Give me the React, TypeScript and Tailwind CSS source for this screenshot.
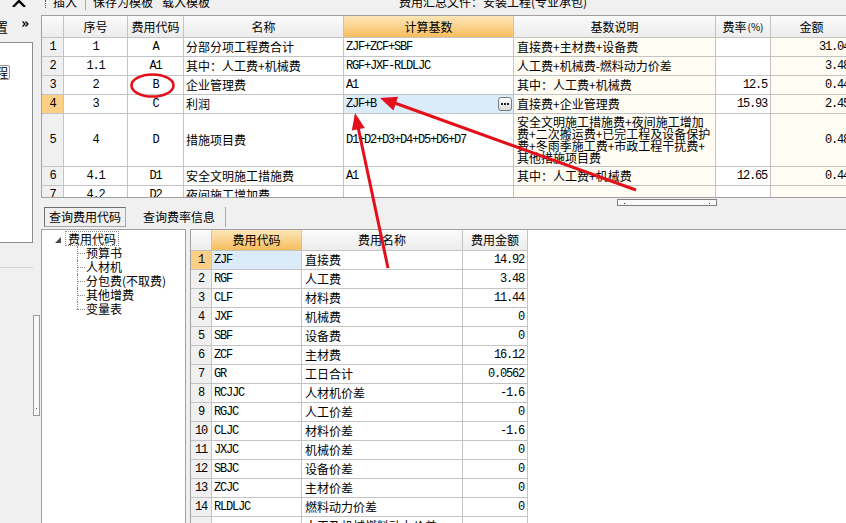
import React from 'react';

const CN = "font-['Noto_Sans_CJK_SC',sans-serif] text-[12px]";
const MONO = "font-['Liberation_Mono','Noto_Sans_CJK_SC',monospace] text-[12px] tracking-[-1.2px]";

type TopRow = {
  n: string;
  no: string;
  code: string;
  name: string;
  base: string;
  desc: string[];
  rate: string;
  amt: string;
  tall?: boolean;
  sel?: boolean;
};

const topRows: TopRow[] = [
  { n: '1', no: '1', code: 'A', name: '分部分项工程费合计', base: 'ZJF+ZCF+SBF', desc: ['直接费+主材费+设备费'], rate: '', amt: '31.04' },
  { n: '2', no: '1.1', code: 'A1', name: '其中：人工费+机械费', base: 'RGF+JXF-RLDLJC', desc: ['人工费+机械费-燃料动力价差'], rate: '', amt: '3.48' },
  { n: '3', no: '2', code: 'B', name: '企业管理费', base: 'A1', desc: ['其中：人工费+机械费'], rate: '12.5', amt: '0.44' },
  { n: '4', no: '3', code: 'C', name: '利润', base: 'ZJF+B', desc: ['直接费+企业管理费'], rate: '15.93', amt: '2.45', sel: true },
  {
    n: '5', no: '4', code: 'D', name: '措施项目费', base: 'D1+D2+D3+D4+D5+D6+D7',
    desc: ['安全文明施工措施费+夜间施工增加', '费+二次搬运费+已完工程及设备保护', '费+冬雨季施工费+市政工程干扰费+', '其他措施项目费'],
    rate: '', amt: '0.48', tall: true,
  },
  { n: '6', no: '4.1', code: 'D1', name: '安全文明施工措施费', base: 'A1', desc: ['其中：人工费+机械费'], rate: '12.65', amt: '0.44' },
  { n: '7', no: '4.2', code: 'D2', name: '夜间施工增加费', base: '', desc: [''], rate: '', amt: '' },
];

const codes: [string, string, string][] = [
  ['ZJF', '直接费', '14.92'],
  ['RGF', '人工费', '3.48'],
  ['CLF', '材料费', '11.44'],
  ['JXF', '机械费', '0'],
  ['SBF', '设备费', '0'],
  ['ZCF', '主材费', '16.12'],
  ['GR', '工日合计', '0.0562'],
  ['RCJJC', '人材机价差', '-1.6'],
  ['RGJC', '人工价差', '0'],
  ['CLJC', '材料价差', '-1.6'],
  ['JXJC', '机械价差', '0'],
  ['SBJC', '设备价差', '0'],
  ['ZCJC', '主材价差', '0'],
  ['RLDLJC', '燃料动力价差', '0'],
  ['', '人工及机械燃料动力价差', ''],
];

const treeItems = ['预算书', '人材机', '分包费(不取费)', '其他增费', '变量表'];

const HEAD = 'bg-gradient-to-b from-[#fbfbfb] to-[#ececec]';
const HEAD_SEL = 'bg-gradient-to-b from-[#fde7b8] to-[#f6bd5c]';

const Toolbar = () => (
  <div className={`h-[15px] overflow-hidden flex items-start ${CN}`}>
    <svg width="14" height="8" viewBox="0 0 14 8" className="ml-[12px] -mt-[1px] shrink-0">
      <polyline points="1,8 7,2 13,8" fill="none" stroke="#000" strokeWidth="2.4" />
    </svg>
    <div className="ml-[19px] w-[1px] h-[8px] border-l border-dotted border-[#555]" />
    <span className="ml-[7px] -mt-[5px] leading-[14px]">插入</span>
    <div className="ml-[8px] w-[1px] h-[10px] bg-[#a8a8a8]" />
    <span className="ml-[7px] -mt-[5px] leading-[14px]">保存为模板</span>
    <span className="ml-[9px] -mt-[5px] leading-[14px]">载入模板</span>
    <span className="ml-[189px] -mt-[5px] leading-[14px]">费用汇总文件：安装工程(专业承包)</span>
  </div>
);

const LeftStrip = () => (
  <div className="w-[41px] shrink-0 flex flex-col">
    <div className={`h-[27px] flex items-start ${CN}`}>
      <span className="-ml-[5px] mt-[5px] text-[13px] leading-[14px]">置</span>
      <svg width="7" height="6" viewBox="0 0 7 6" className="ml-[14px] mt-[6px]">
        <polyline points="0.5,0.5 3,3 0.5,5.5" fill="none" stroke="#000" strokeWidth="1.3" />
        <polyline points="3.5,0.5 6,3 3.5,5.5" fill="none" stroke="#000" strokeWidth="1.3" />
      </svg>
    </div>
    <div className="w-[33px] h-[201px] bg-white border-t border-r border-b border-[#8c8c8c] pt-[17px]">
      <span className={`-ml-[6px] inline-block border border-[#9a9a9a] rounded-[2px] bg-[#f4f4f4] leading-[13px] px-[1px] ${CN}`}>程</span>
    </div>
    <div className="w-[33px] h-[25px] border-b border-[#d6d6d6]" />
    <div className="ml-[33px] mt-[47px] w-[7px] h-[101px] border border-[#9a9a9a] bg-[#f8f8f8] flex items-end justify-center pb-[6px]">
      <div className="w-[1px] h-[1px] bg-[#444]" />
    </div>
  </div>
);

const TopGrid = () => (
  <div className="h-[183px] overflow-hidden border-l border-t border-b border-[#a0a0a0] bg-white">
    <div className="w-[811px]">
      <div className={`flex h-[22px] border-b border-[#c4c4c4] ${CN}`}>
        <div className={`w-[22px] shrink-0 border-r border-[#c4c4c4] ${HEAD}`} />
        <div className={`w-[64px] shrink-0 border-r border-[#c4c4c4] flex items-center justify-center ${HEAD}`}>序号</div>
        <div className={`w-[56px] shrink-0 border-r border-[#c4c4c4] flex items-center justify-center ${HEAD}`}>费用代码</div>
        <div className={`w-[160px] shrink-0 border-r border-[#c4c4c4] flex items-center justify-center ${HEAD}`}>名称</div>
        <div className={`w-[170px] shrink-0 border-r border-[#c4c4c4] flex items-center justify-center ${HEAD_SEL}`}>计算基数</div>
        <div className={`w-[202px] shrink-0 border-r border-[#c4c4c4] flex items-center justify-center ${HEAD}`}>基数说明</div>
        <div className={`w-[55px] shrink-0 border-r border-[#c4c4c4] flex items-center justify-center ${HEAD}`}>
          费率<span className="text-[10px] ml-[1px]">(%)</span>
        </div>
        <div className={`w-[82px] shrink-0 border-r border-[#c4c4c4] flex items-center justify-center ${HEAD}`}>金额</div>
      </div>
      {topRows.map((r) => (
        <div key={r.n} className={`flex border-b border-[#c4c4c4] ${r.tall ? 'h-[53px]' : 'h-[19px]'}`}>
          <div className={`w-[22px] shrink-0 border-r border-[#c4c4c4] flex items-center justify-center ${r.sel ? 'bg-[#fbcf86]' : 'bg-[#f0f0f0]'} ${MONO}`}>{r.n}</div>
          <div className={`w-[64px] shrink-0 border-r border-[#c4c4c4] flex items-center justify-center ${MONO}`}>{r.no}</div>
          <div className={`w-[56px] shrink-0 border-r border-[#c4c4c4] flex items-center justify-center ${MONO}`}>{r.code}</div>
          <div className={`w-[160px] shrink-0 border-r border-[#c4c4c4] flex items-center pl-[2px] whitespace-nowrap ${CN}`}>{r.name}</div>
          <div className={`w-[170px] shrink-0 border-r border-[#c4c4c4] flex items-center pl-[2px] pr-[1px] ${r.sel ? 'bg-[#dcebfa]' : ''} ${MONO}`}>
            <span className="flex-1">{r.base}</span>
            {r.sel && (
              <span className="w-[14px] h-[14px] rounded-[3px] border border-[#7c7c7c] bg-gradient-to-b from-white to-[#dcdcdc] flex items-center justify-center gap-[1px]">
                <span className="w-[2px] h-[2px] bg-[#222]" />
                <span className="w-[2px] h-[2px] bg-[#222]" />
                <span className="w-[2px] h-[2px] bg-[#222]" />
              </span>
            )}
          </div>
          <div className={`w-[202px] shrink-0 border-r border-[#c4c4c4] bg-[#fffdf3] flex flex-col justify-center pl-[3px] whitespace-nowrap leading-[12px] ${CN}`}>
            {r.desc.map((d, i) => (
              <span key={i}>{d}</span>
            ))}
          </div>
          <div className={`w-[55px] shrink-0 border-r border-[#c4c4c4] flex items-center justify-end pr-[3px] ${MONO}`}>{r.rate}</div>
          <div className={`w-[82px] shrink-0 border-r border-[#c4c4c4] bg-[#fffdf3] flex items-center justify-end pr-[3px] ${MONO}`}>{r.amt}</div>
        </div>
      ))}
    </div>
  </div>
);

const Tree = () => (
  <div className={`w-[145px] shrink-0 bg-white border-l border-t border-r border-[#a0a0a0] pt-[1px] pl-[13px] ${CN}`}>
    <div className="flex items-center h-[15px]">
      <svg width="6" height="6" viewBox="0 0 6 6" className="mt-[2px]">
        <polygon points="0,6 6,0 6,6" fill="#4a4a4a" />
      </svg>
      <span className="ml-[4px] border border-dotted border-[#8a8a8a] leading-[13px] px-[2px]">费用代码</span>
    </div>
    <div className="ml-[22px] w-fit">
      {treeItems.map((t, i) => (
        <div key={t} className="flex items-center h-[14px] relative">
          <div
            className={`absolute left-0 top-0 border-l border-dotted border-[#8a8a8a] ${i === treeItems.length - 1 ? 'h-[7px]' : 'h-[14px]'}`}
          />
          <div className="w-[8px] border-t border-dotted border-[#8a8a8a]" />
          <span className="ml-[1px] leading-[14px] whitespace-nowrap">{t}</span>
        </div>
      ))}
    </div>
  </div>
);

const CodeGrid = () => (
  <div className="flex-1 bg-white border-l border-t border-[#a0a0a0] overflow-hidden">
    <div className="w-[337px]">
      <div className={`flex h-[21px] border-b border-[#c4c4c4] ${CN}`}>
        <div className={`w-[21px] shrink-0 border-r border-[#c4c4c4] ${HEAD}`} />
        <div className={`w-[90px] shrink-0 border-r border-[#c4c4c4] flex items-center justify-center ${HEAD_SEL}`}>费用代码</div>
        <div className={`w-[161px] shrink-0 border-r border-[#c4c4c4] flex items-center justify-center ${HEAD}`}>费用名称</div>
        <div className={`w-[65px] shrink-0 border-r border-[#c4c4c4] flex items-center justify-center ${HEAD}`}>费用金额</div>
      </div>
      {codes.map(([c, name, amt], i) => (
        <div key={i} className="flex h-[19px] border-b border-[#c4c4c4]">
          <div className={`w-[21px] shrink-0 border-r border-[#c4c4c4] flex items-center justify-center ${i === 0 ? 'bg-[#fbcf86]' : 'bg-[#f0f0f0]'} ${MONO}`}>{c ? i + 1 : ''}</div>
          <div className={`w-[90px] shrink-0 border-r border-[#c4c4c4] flex items-center pl-[2px] ${i === 0 ? 'bg-[#dcebfa]' : ''} ${MONO}`}>{c}</div>
          <div className={`w-[161px] shrink-0 border-r border-[#c4c4c4] flex items-center pl-[3px] whitespace-nowrap ${CN}`}>{name}</div>
          <div className={`w-[65px] shrink-0 border-r border-[#c4c4c4] flex items-center justify-end pr-[3px] ${MONO}`}>{amt}</div>
        </div>
      ))}
    </div>
  </div>
);

const Annotations = () => (
  <svg className="absolute inset-0 pointer-events-none" width="846" height="523" viewBox="0 0 846 523">
    <ellipse cx="152.5" cy="85.5" rx="21" ry="11" fill="none" stroke="#e3101b" strokeWidth="2.6" />
    <line x1="636" y1="190" x2="392" y2="102" stroke="#e3101b" strokeWidth="3" />
    <polygon points="380,98 398,96.8 393.5,110.5" fill="#e3101b" />
    <line x1="388" y1="268" x2="358" y2="127" stroke="#e3101b" strokeWidth="3" />
    <polygon points="355,113 364.8,128 351.8,130.6" fill="#e3101b" />
  </svg>
);

export default function App() {
  return (
    <div className="relative w-[846px] h-[523px] overflow-hidden bg-[#f0f0f0] text-black">
      <Toolbar />
      <div className="flex h-[508px]">
        <LeftStrip />
        <div className="flex-1 flex flex-col min-w-0">
          <TopGrid />
          <div className="h-[9px] pt-[1px]">
            <div className="ml-[576px] w-[100px] h-[7px] border border-[#808080] bg-[#fafafa] flex items-end justify-between px-[6px] pb-[1px]">
              <div className="w-[1px] h-[1px] bg-[#333]" />
              <div className="w-[1px] h-[1px] bg-[#333]" />
            </div>
          </div>
          <div className={`h-[22px] flex items-start ${CN}`}>
            <div className="ml-[3px] w-[82px] h-[20px] border border-t-[#6e6e6e] border-l-[#6e6e6e] border-r-[#a8a8a8] border-b-[#a8a8a8] flex items-center justify-center">
              查询费用代码
            </div>
            <div className="w-[100px] h-[20px] flex items-center pl-[17px] border-r border-[#a8a8a8]">查询费率信息</div>
          </div>
          <div className="flex-1 flex min-h-0">
            <Tree />
            <div className="w-[4px] shrink-0" />
            <CodeGrid />
          </div>
        </div>
      </div>
      <Annotations />
    </div>
  );
}
